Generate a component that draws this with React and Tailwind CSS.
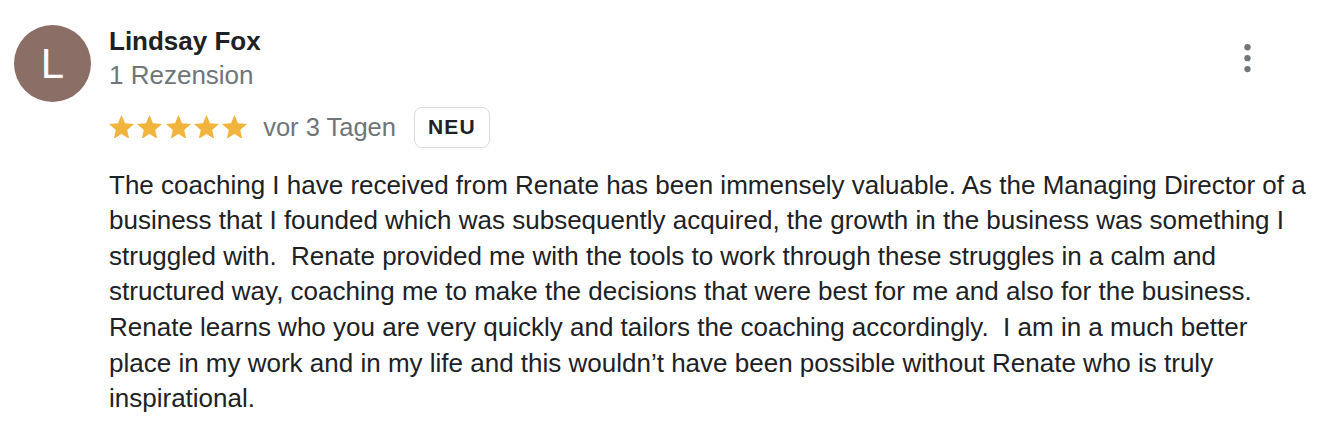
import React from "react";

const Star = () => (
  <svg width="25" height="23.75" viewBox="2 2 20 19" className="block">
    <path
      d="M12 17.27L18.18 21l-1.64-7.03L22 9.24l-7.19-.61L12 2 9.19 8.63 2 9.24l5.46 4.73L5.82 21z"
      fill="#f1b53d"
    />
  </svg>
);

const text =
  "The coaching I have received from Renate has been immensely valuable. As the Managing Director of a business that I founded which was subsequently acquired, the growth in the business was something I struggled with.  Renate provided me with the tools to work through these struggles in a calm and structured way, coaching me to make the decisions that were best for me and also for the business. Renate learns who you are very quickly and tailors the coaching accordingly.  I am in a much better place in my work and in my life and this wouldn\u2019t have been possible without Renate who is truly inspirational.";

export default function App() {
  return (
    <div className="relative w-[1342px] h-[430px] bg-white overflow-hidden font-['Liberation_Sans',Arial,sans-serif]">
      <div className="flex pl-[14px] pt-[24px] gap-[18px]">
        <div className="mt-[1px] w-[77px] h-[77px] rounded-full bg-[#8b6e65] flex items-center justify-center shrink-0">
          <span className="text-white text-[42px] leading-none">L</span>
        </div>
        <div className="flex flex-col w-[1200px]">
          <div className="text-[26px] leading-[34.3px] font-bold text-[#202124]">
            Lindsay Fox
          </div>
          <div className="text-[26px] leading-[34.3px] text-[#70757a]">
            1 Rezension
          </div>
          <div className="mt-[14px] h-[41px] flex items-center">
            <div className="flex items-center gap-[3.3px] -mt-[1px]">
              <Star />
              <Star />
              <Star />
              <Star />
              <Star />
            </div>
            <span className="ml-[16px] text-[25.5px] text-[#70757a]">
              vor 3 Tagen
            </span>
            <span className="ml-[18px] h-[41px] px-[13px] flex items-center rounded-[8px] border border-[#dadce0] text-[21px] font-bold tracking-[1.2px] text-[#202124]">
              NEU
            </span>
          </div>
          <p className="mt-[20px] text-[26px] leading-[35.6px] text-[#202124] whitespace-pre-wrap">
            {text}
          </p>
        </div>
      </div>
      <button className="absolute left-[1227px] top-[38px] w-[41px] h-[41px] flex items-center justify-center">
        <svg width="41" height="41" viewBox="0 0 24 24">
          <circle cx="12" cy="5.4" r="1.85" fill="#70757a" />
          <circle cx="12" cy="11.8" r="1.85" fill="#70757a" />
          <circle cx="12" cy="18.2" r="1.85" fill="#70757a" />
        </svg>
      </button>
    </div>
  );
}
